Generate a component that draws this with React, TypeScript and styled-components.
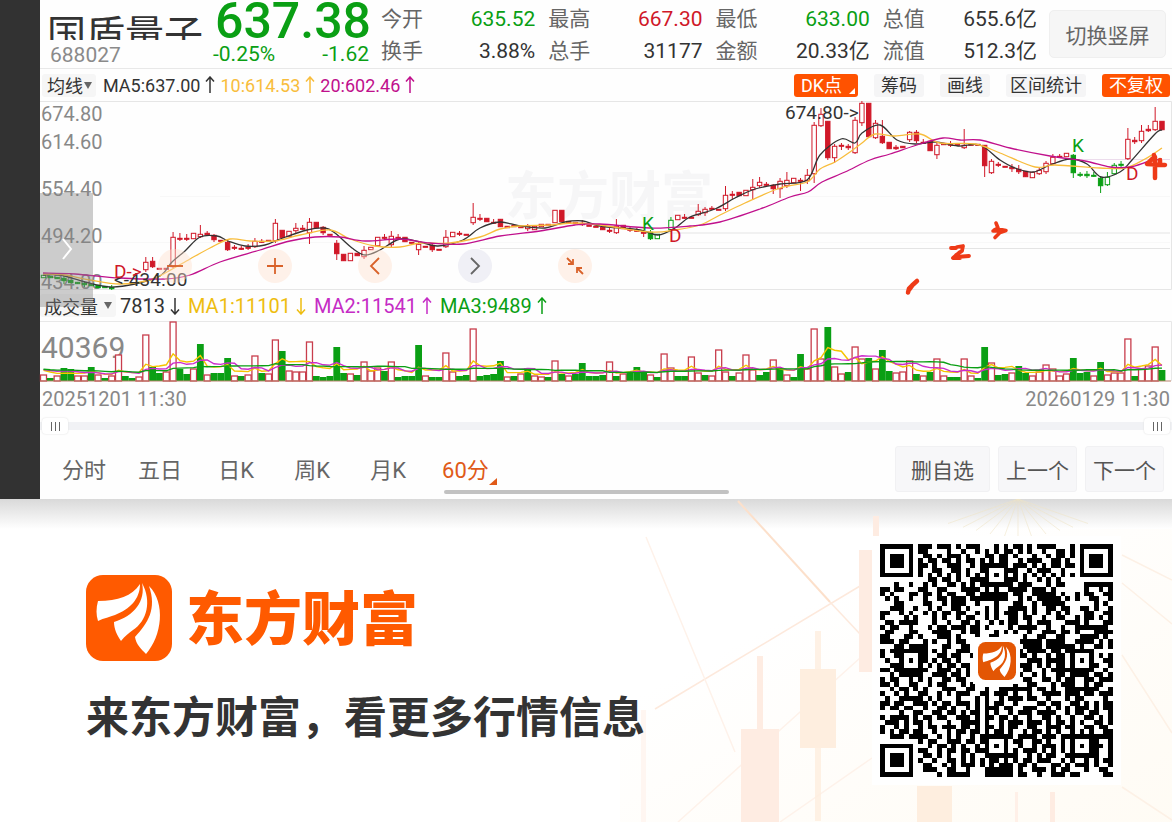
import React from "react";
import styled, { createGlobalStyle } from "styled-components";

const GlobalStyle = createGlobalStyle`
  * { box-sizing: border-box; }
  body { margin: 0; background: #fff; font-family: Roboto, "Noto Sans CJK SC", sans-serif; color: #333; }
  button { font-family: inherit; padding: 0; border: 0; background: none; cursor: pointer; white-space: nowrap; }
`;

const GREEN = "#0a9f14";
const RED = "#d01828";
const ORANGE = "#f8bd3c";
const MAGENTA = "#c0108c";
const BRAND = "#ff5a00";

const Terminal = styled.main`
  display: flex;
`;
const SideBar = styled.div`
  flex: 0 0 40px;
  background: #323232;
`;
const Panel = styled.div`
  flex: 1;
  min-width: 0;
  background: #fefefe;
`;

const Header = styled.header`
  display: flex;
  height: 69px;
  padding-right: 6px;
  border-bottom: 1px solid #e8e8e8;
`;
const NameBlock = styled.div`
  width: 173px;
  padding: 8px 0 0 7px;
`;
const StockName = styled.h1`
  height: 32px;
  margin: 0;
  overflow: hidden;
  font-size: 39px;
  line-height: 54px;
  font-weight: 400;
  white-space: nowrap;
`;
const StockCode = styled.div`
  padding-left: 3px;
  font-size: 21px;
  line-height: 30px;
  color: #8a8a8a;
`;
const PriceBlock = styled.div`
  width: 156px;
  color: ${GREEN};
`;
const Price = styled.div`
  height: 40px;
  padding-left: 2px;
  font-size: 50px;
  line-height: 42px;
  font-weight: 500;
`;
const Change = styled.div`
  display: flex;
  justify-content: space-between;
  font-size: 21px;
  line-height: 28px;
`;
const Stats = styled.dl`
  flex: 1;
  display: grid;
  grid-template-columns: repeat(4, 1fr);
  grid-auto-rows: 32px;
  column-gap: 13px;
  margin: 3px 0 0 12px;
`;
const Stat = styled.div`
  display: flex;
  justify-content: space-between;
  font-size: 21px;
  line-height: 32px;
  white-space: nowrap;
  dt { color: #666; }
  dd { margin: 0; }
`;
const StatValue = styled.dd<{ $color?: string }>`
  color: ${(p) => p.$color || "#333"};
`;
const RotateButton = styled.button`
  width: 117px;
  height: 48px;
  margin: 10px 0 0 12px;
  border: 1px solid #efefef;
  border-radius: 5px;
  background: #f6f6f6;
  color: #666;
  font-size: 21px;
`;

const IndicatorRow = styled.div`
  display: flex;
  align-items: center;
  height: 32px;
  padding: 0 2px;
  font-size: 18px;
`;
const Picker = styled.button<{ $gap: number }>`
  display: flex;
  align-items: center;
  gap: ${(p) => p.$gap}px;
  height: 23px;
  margin-right: 7px;
  padding: 0 4px 0 5px;
  border-radius: 3px;
  background: #f6f6f6;
  font-size: 18px;
  color: #333;
`;
const Reading = styled.span<{ $color: string }>`
  display: flex;
  align-items: center;
  gap: 5px;
  margin-right: 5px;
  color: ${(p) => p.$color};
  white-space: nowrap;
`;
const Tools = styled.div`
  display: flex;
  gap: 16px;
  margin-left: auto;
`;
const ToolButton = styled.button<{ $active?: boolean; $tight?: boolean }>`
  position: relative;
  height: 23px;
  padding: 0 ${(p) => (p.$tight ? 4 : 7)}px;
  border-radius: 3px;
  background: ${(p) => (p.$active ? "#ff5200" : "#f5f5f6")};
  color: ${(p) => (p.$active ? "#fff" : "#333")};
  font-size: 18px;
  line-height: 23px;
`;
const DkButton = styled(ToolButton)`
  padding-right: 16px;
  &::after {
    content: "";
    position: absolute;
    right: 3px;
    bottom: 3px;
    border-left: 6px solid transparent;
    border-bottom: 6px solid #fff;
  }
`;

const ChartArea = styled.section`
  position: relative;
`;
const Drawing = styled.svg`
  display: block;
  width: 100%;
  height: auto;
  overflow: visible;
`;
const FloatingControls = styled.div`
  position: absolute;
  left: 118px;
  bottom: 7px;
  display: flex;
  gap: 66px;
`;
const RoundButton = styled.button<{ $muted?: boolean }>`
  width: 34px;
  height: 34px;
  border-radius: 50%;
  background: ${(p) => (p.$muted ? "rgba(225,226,238,.5)" : "rgba(255,225,205,.42)")};
  color: ${(p) => (p.$muted ? "#666" : "#d9622a")};
  svg { display: block; }
`;
const DrawerHandle = styled.button`
  position: absolute;
  z-index: 2;
  left: 0;
  bottom: -17px;
  width: 53px;
  height: 114px;
  background: rgba(130, 130, 130, 0.4);
`;

const VolumeRow = styled(IndicatorRow)`
  height: 31px;
  padding: 0;
  font-size: 20px;
  ${Picker} {
    margin-right: 4px;
    padding-left: 4px;
  }
  ${Reading} {
    margin-right: 8px;
  }
`;
const Dates = styled.div`
  display: flex;
  justify-content: space-between;
  padding: 3px 2px 0;
  font-size: 20px;
  line-height: 28px;
  color: #888;
`;
const RangeTrack = styled.div`
  position: relative;
  height: 8px;
  margin-top: 9px;
  background: #f1f2f5;
`;
const RangeInput = styled.input`
  position: absolute;
  left: 2px;
  top: -4px;
  width: calc(100% - 4px);
  height: 16px;
  margin: 0;
  appearance: none;
  background: none;
  pointer-events: none;
  &::-webkit-slider-thumb {
    appearance: none;
    pointer-events: auto;
    width: 26px;
    height: 16px;
    border-radius: 4px;
    background:
      linear-gradient(90deg, #666 1px, transparent 1px 4px, #666 4px 5px, transparent 5px 8px, #666 8px 9px) center / 9px 9px no-repeat,
      #fff;
    box-shadow: 0 0 2px #ddd;
  }
`;
const Footer = styled.nav`
  position: relative;
  display: flex;
  align-items: center;
  height: 48px;
  margin-top: 15px;
  padding: 0 8px 0 22px;
`;
const Tabs = styled.div`
  display: flex;
  gap: 32px;
  padding-top: 3px;
`;
const Tab = styled.button<{ $active?: boolean }>`
  position: relative;
  min-width: 44px;
  font-size: 22px;
  line-height: 34px;
  color: ${(p) => (p.$active ? "#e05a18" : "#666")};
  &::after {
    content: "";
    display: ${(p) => (p.$active ? "block" : "none")};
    position: absolute;
    right: -8px;
    bottom: 3px;
    border-left: 8px solid transparent;
    border-bottom: 7px solid #e05a18;
  }
`;
const ScrollBar = styled.div`
  position: absolute;
  left: 404px;
  bottom: -1px;
  width: 285px;
  height: 4px;
  border-radius: 2px;
  background: #c2c2c2;
`;
const Actions = styled.div`
  display: flex;
  gap: 8px;
  margin-left: auto;
`;
const ActionButton = styled.button<{ $wide?: boolean }>`
  width: ${(p) => (p.$wide ? 95 : 79)}px;
  height: 46px;
  border: 1px solid #f1f1f3;
  border-radius: 3px;
  background: #f7f7f9;
  color: #555;
  font-size: 21px;
`;
const PanelEnd = styled.div`
  height: 6px;
`;

const Banner = styled.footer`
  position: relative;
  display: flex;
  align-items: flex-start;
  justify-content: space-between;
  height: 323px;
  padding: 45px 59px 0 86px;
  overflow: hidden;
  background: linear-gradient(#d9d9d9, #e8e8e8 12px, #fff 30px);
`;
const BannerArt = styled.svg`
  position: absolute;
  right: 0;
  top: 0;
`;
const Brand = styled.div`
  position: relative;
  padding-top: 31px;
`;
const LogoRow = styled.div`
  display: flex;
  align-items: center;
  gap: 14px;
  height: 86px;
`;
const LogoText = styled.div`
  font-size: 58px;
  line-height: 86px;
  padding-top: 4px;
  font-weight: 900;
  color: ${BRAND};
`;
const Slogan = styled.p`
  margin: 26px 0 0;
  font-size: 43px;
  line-height: 62px;
  font-weight: 700;
  color: #333;
  white-space: nowrap;
`;
const QrHolder = styled.div`
  position: relative;
`;
const QrMark = styled.div`
  position: absolute;
  inset: 0 0 4px;
  display: flex;
  align-items: center;
  justify-content: center;
`;

type Kind = "u" | "d" | "g" | "h";
type Candle = [number, Kind, number, number, number?, number?];

// Index, kind, body top, body bottom, wick top, wick bottom.
const candles: Candle[] = [
  [0, "h", 275, 278], [1, "g", 276, 278], [2, "g", 277, 279], [3, "g", 278, 281, 276, 284], [4, "g", 280, 283], [5, "g", 282, 284],
  [6, "g", 283, 285, 281, 287], [7, "g", 284, 286], [8, "g", 285, 288], [9, "g", 286, 288], [10, "g", 287, 289, 285, 290],
  [15, "u", 262, 270, 257, 272],
  [16, "d", 261, 267, 257, 268], [17, "d", 268, 269], [18, "d", 268, 269], [19, "u", 237, 267, 232, 268], [20, "d", 238, 239, 233, 241],
  [21, "d", 238, 239, 234, 241], [22, "u", 233, 239], [23, "u", 234, 237, 225, 238], [24, "d", 233, 235, 231, 236], [25, "d", 235, 240, 234, 242],
  [26, "d", 240, 241], [27, "d", 242, 250, 240, 251], [28, "d", 247, 248, 245, 250], [29, "d", 248, 249, 246, 250], [30, "d", 247, 248, 244, 250],
  [31, "u", 241, 247, 238, 248], [32, "d", 241, 242, 239, 243], [33, "d", 240, 241], [34, "u", 223, 241, 219, 243], [35, "d", 230, 238],
  [36, "u", 231, 237], [37, "u", 228, 231, 223, 233], [38, "d", 228, 229, 225, 230], [39, "u", 222, 233, 218, 244], [40, "d", 222, 228],
  [41, "d", 227, 233, 226, 235], [42, "d", 234, 235], [43, "d", 243, 254, 240, 260], [44, "d", 254, 261], [45, "u", 253, 261],
  [46, "d", 253, 256], [47, "u", 250, 257, 246, 259], [48, "u", 247, 250], [49, "u", 237, 246], [50, "d", 237, 238, 234, 240],
  [51, "u", 236, 245, 231, 247], [52, "d", 237, 238, 234, 240], [53, "d", 237, 242], [54, "d", 242, 243], [55, "u", 244, 250, 242, 255],
  [56, "d", 246, 247], [57, "d", 245, 250, 243, 252], [58, "d", 249, 250], [59, "u", 237, 247, 230, 248], [60, "u", 232, 237],
  [61, "d", 233, 234, 231, 236], [62, "d", 234, 235], [63, "u", 217, 223, 203, 225], [64, "d", 218, 219, 214, 221], [65, "d", 218, 222],
  [66, "d", 222, 223, 219, 224], [67, "d", 219, 227], [68, "d", 226, 228], [69, "d", 225, 227], [70, "d", 226, 228], [71, "u", 226, 229, 224, 231],
  [72, "u", 226, 230], [73, "u", 224, 227], [74, "d", 224, 226], [75, "u", 210, 223], [76, "d", 210, 222], [77, "d", 221, 223],
  [78, "d", 222, 224], [79, "d", 223, 225, 220, 226], [80, "d", 225, 226], [81, "d", 226, 227], [82, "d", 227, 230], [83, "d", 230, 231, 228, 233],
  [84, "u", 226, 233, 219, 234], [85, "d", 225, 229], [86, "d", 229, 230, 227, 232], [87, "d", 230, 231, 228, 232], [88, "d", 232, 233, 230, 237],
  [89, "g", 232, 239, 230, 240], [90, "h", 234, 239], [92, "h", 220, 230, 217, 232], [93, "u", 215, 220], [94, "d", 217, 218, 214, 219],
  [95, "d", 217, 218], [96, "u", 211, 215, 204, 216], [97, "u", 209, 213, 207, 216], [98, "d", 208, 209, 206, 210], [99, "d", 209, 210],
  [100, "u", 195, 209, 186, 211], [101, "d", 194, 195, 191, 199], [102, "d", 192, 196], [103, "u", 190, 196], [104, "u", 187, 190, 179, 200],
  [105, "u", 182, 186, 177, 188], [106, "d", 184, 185, 182, 187], [107, "d", 185, 189, 184, 194], [108, "u", 181, 189, 178, 198],
  [109, "u", 180, 186, 172, 188], [110, "u", 178, 183], [111, "d", 180, 181, 178, 191], [112, "u", 175, 181, 169, 184],
  [113, "u", 125, 174, 122, 183], [114, "u", 114, 126, 108, 127], [115, "d", 121, 158, 121, 160], [116, "u", 146, 158, 144, 163],
  [117, "d", 145, 146, 143, 150], [118, "d", 146, 148, 144, 150], [119, "u", 120, 153, 117, 154], [120, "u", 103, 123, 101, 126], [121, "d", 103, 137],
  [122, "u", 123, 138, 120, 139], [123, "d", 136, 143, 120, 144], [124, "d", 142, 149], [125, "d", 147, 149, 145, 150], [126, "d", 146, 148],
  [127, "u", 132, 140, 131, 142], [128, "d", 132, 141, 130, 143], [129, "d", 142, 143, 139, 144], [130, "d", 141, 151], [131, "u", 145, 155, 143, 159],
  [132, "d", 143, 145], [133, "d", 144, 145, 141, 147], [134, "d", 144, 145], [135, "u", 145, 148, 129, 149], [136, "d", 144, 145], [137, "d", 144, 145],
  [138, "d", 145, 166, 145, 177], [139, "u", 161, 173, 159, 174], [140, "d", 164, 165, 162, 167], [141, "d", 166, 167], [142, "d", 167, 169, 164, 172],
  [143, "d", 169, 172, 165, 174], [144, "d", 171, 177], [145, "u", 172, 178], [146, "u", 170, 174, 167, 175], [147, "u", 163, 172, 161, 174],
  [148, "u", 157, 164, 154, 165], [149, "d", 156, 157, 154, 158], [150, "u", 153, 157], [151, "g", 155, 173, 154, 178], [152, "g", 174, 175, 172, 177],
  [153, "g", 174, 176, 171, 178], [154, "g", 175, 176, 172, 177], [155, "g", 178, 186, 176, 193], [156, "h", 177, 185, 172, 186], [157, "h", 165, 174, 163, 175],
  [158, "g", 164, 165, 161, 167], [159, "u", 139, 159, 128, 160], [160, "d", 140, 142, 137, 144], [161, "u", 131, 141, 125, 143],
  [162, "d", 129, 131, 125, 132], [163, "u", 121, 130, 107, 131], [164, "d", 121, 130],
];

const volumeText =
  "r6 g3 r5 g13 g12 r5 r5 g14 r6 g3 r5 r26 g5 g3 r4 r46 g14 g8 r9 r59 g12 g7 r12 g37 r6 g8 g8 g23 r5 g5 r6 r25 g8 r7 r41 g30 r10 r9 r9 r39 g5 g4 g5 g34 g8 r7 g6 r19 r10 r13 g10 r19 g4 g5 g5 g36 r5 g4 g4 r28 r9 g5 g6 r52 g5 g6 g7 g20 r4 g5 r7 g13 r5 r4 g4 r20 g7 r5 g7 g18 g5 g5 g6 r19 g5 r7 g9 g14 g9 r6 g4 r27 r13 g5 g5 r24 r8 g6 r5 r31 r9 g5 r8 r26 r11 g6 g9 r21 g13 r6 g4 g27 r12 r52 r22 g54 r14 r7 g9 r34 r22 g23 r12 g31 g10 r8 r9 r20 g7 r5 g9 r22 r5 g4 g4 r22 r5 g3 g34 r18 g6 g7 r8 g15 g8 r5 r9 r16 r12 r5 r7 g23 g8 g9 r5 g19 r6 r8 r8 r42 g5 r12 r15 r34 g11";
const volumes = volumeText.split(" ").map((v) => ({ up: v[0] === "r", h: Number(v.slice(1)) }));

const xAt = (i: number) => 43.5 + 6.82 * i;

function average(span: number) {
  return volumes
    .map((_, i) => {
      const part = volumes.slice(Math.max(0, i - span + 1), i + 1);
      const sum = part.reduce((a, b) => a + b.h, 0) + (span - part.length) * 12;
      return `${xAt(i).toFixed(1)},${(381 - sum / span).toFixed(1)}`;
    })
    .join(" ");
}

// Catmull-Rom spline through the given points.
function smooth(points: number[][]) {
  let d = `M${points[0]}`;
  for (let i = 0; i < points.length - 1; i++) {
    const a = points[Math.max(0, i - 1)];
    const b = points[i];
    const c = points[i + 1];
    const e = points[Math.min(points.length - 1, i + 2)];
    d += `C${b[0] + (c[0] - a[0]) / 6},${b[1] + (c[1] - a[1]) / 6} ${c[0] - (e[0] - b[0]) / 6},${c[1] - (e[1] - b[1]) / 6} ${c}`;
  }
  return d;
}

const ma5 = [[43, 275], [60, 275], [85, 282], [110, 287], [135, 284], [160, 276], [172, 262], [185, 251], [200, 237], [217, 236], [228, 241], [245, 246], [265, 245], [280, 239], [307, 230], [325, 228], [335, 233], [352, 248], [365, 255], [380, 250], [400, 239], [420, 242], [438, 246], [463, 240], [480, 228], [500, 222], [520, 226], [545, 228], [565, 222], [583, 221], [600, 226], [640, 230], [658, 235], [675, 228], [690, 217], [715, 209], [735, 198], [755, 189], [780, 184], [807, 180], [820, 155], [841, 139], [855, 143], [862, 133], [880, 125], [897, 140], [915, 144], [935, 142], [958, 146], [980, 145], [1000, 160], [1015, 168], [1033, 172], [1050, 165], [1070, 159], [1087, 164], [1101, 177], [1120, 172], [1132, 160], [1155, 134], [1162, 130]];
const ma10 = [[43, 274], [65, 275], [90, 280], [120, 284], [150, 280], [167, 272], [190, 259], [210, 248], [230, 239], [250, 241], [275, 241], [300, 235], [330, 230], [350, 239], [375, 246], [400, 247], [420, 243], [450, 243], [480, 237], [500, 229], [520, 226], [550, 225], [575, 223], [600, 225], [650, 232], [675, 230], [700, 225], [720, 215], [745, 203], [780, 188], [807, 182], [820, 169], [835, 162], [850, 152], [862, 143], [875, 134], [895, 136], [920, 134], [940, 143], [975, 144], [1000, 153], [1035, 167], [1055, 165], [1100, 168], [1125, 168], [1145, 159], [1162, 148]];
const ma20 = [[43, 273], [75, 274], [120, 278], [165, 279], [190, 275], [220, 262], [260, 250], [290, 241], [315, 237], [340, 237], [365, 241], [400, 239], [430, 243], [463, 244], [500, 236], [540, 231], [575, 225], [600, 224], [650, 228], [690, 226], [720, 222], [760, 209], [790, 197], [808, 192], [822, 182], [845, 172], [870, 160], [890, 154], [920, 144], [943, 138], [960, 140], [980, 140], [1010, 148], [1050, 156], [1085, 161], [1110, 167], [1130, 167], [1150, 161], [1162, 159]];

function CandleShape({ c }: { c: Candle }) {
  const [i, kind, top, bottom, high = top, low = bottom] = c;
  const x = xAt(i);
  const color = kind === "u" || kind === "d" ? RED : GREEN;
  const hollow = kind === "u" || kind === "h";
  return (
    <g stroke={color} fill={hollow ? "#fff" : color} strokeWidth="1">
      <path d={`M${x} ${high}V${low}`} />
      <rect x={x - 2.2} y={top + 0.3} width="4.4" height={Math.max(1, bottom - top - 0.6)} />
    </g>
  );
}

function PriceChart() {
  return (
    <Drawing viewBox="40 101 1132 189" fontFamily='Roboto, "Noto Sans CJK SC", sans-serif'>
      <text x="505" y="215" fontSize="52" fontWeight="700" fill="#f6f6f7">东方财富</text>
      <path d="M40 101.5H1171.5V289.5H40" fill="none" stroke="#e6e6e6" />
      <path d="M640 233H1170M480 248.500H1170" stroke="#e4e4e4" />
      <path d="M40 242.500H1170M160 196.500H230M780 196.500H1170" stroke="#f8f8f8" />
      <path d="M1070 159.500H1170" stroke="#ecdcec" />
      <g fontSize="20" fill="#888">
        <text x="41" y="121">674.80</text>
        <text x="41" y="149">614.60</text>
        <text x="41" y="196">554.40</text>
        <text x="41" y="243">494.20</text>
        <text x="41" y="289">434.00</text>
      </g>
      {candles.map((c) => <CandleShape key={c[0]} c={c} />)}
      <g fill="none" strokeWidth="1.300">
        <path d={smooth(ma5)} stroke="#333" />
        <path d={smooth(ma10)} stroke={ORANGE} />
        <path d={smooth(ma20)} stroke={MAGENTA} />
      </g>
      <g fontSize="19">
        <text x="785" y="119" fill="#333">674.80-&gt;</text>
        <text x="114" y="286" fill="#333">&lt;-434.00</text>
        <text x="114" y="278" fill={RED}>D-&gt;</text>
        <text x="642" y="230" fill={GREEN}>K</text>
        <text x="669" y="242" fill={RED}>D</text>
        <text x="1072" y="152" fill={GREEN}>K</text>
        <text x="1126" y="180" fill={RED}>D</text>
      </g>
      <g fill="none" stroke="#ee3a17" strokeWidth="4" strokeLinecap="round" strokeLinejoin="round">
        <path d="M908 292.500l1-4 3-3 5-4.500M909 290l3-4" strokeWidth="4.500" />
        <path d="M951 248h5M957 247l6-1-1 5-6 4M960 252l-7 6 7 0M956 257l13-1" strokeWidth="3.800" />
        <path d="M996 223l2 5-4 2M998 229l8 1.500-6 2-5 5M993 231h10" strokeWidth="3.600" />
        <path d="M1154 155v4M1152 159l-5 5 18 1M1155 157v21M1154 165h6M1160 160v4" strokeWidth="4.500" />
      </g>
    </Drawing>
  );
}

function VolumeChart() {
  return (
    <Drawing viewBox="40 321 1132 61" fontFamily="Roboto, sans-serif">
      <path d="M40 321.500H1171.500V381" fill="none" stroke="#e8e8e8" />
      <text x="41" y="358" fontSize="30" fill="#888">40369</text>
      {volumes.map((v, i) => (
        <rect
          key={i}
          x={xAt(i) - (v.up ? 3 : 3.4)}
          y={381 - v.h}
          width={v.up ? 6 : 6.8}
          height={v.h}
          fill={v.up ? "#fff" : GREEN}
          stroke={v.up ? "#c83d4c" : "none"}
          strokeWidth="1.300"
        />
      ))}
      <g fill="none" strokeWidth="1.400">
        <polyline points={average(5)} stroke="#f5c400" />
        <polyline points={average(10)} stroke="#cc2ccc" />
        <polyline points={average(20)} stroke={GREEN} />
      </g>
      <path d="M40 381H1171" stroke="#b9826c" strokeWidth="1" />
    </Drawing>
  );
}

function Arrow({ down }: { down?: boolean }) {
  return (
    <svg width="10" height="18" viewBox="0 0 10 18" fill="none" stroke="currentColor" strokeWidth="1.500" aria-hidden="true">
      <path d={down ? "M5 1V17M1 12.500L5 17L9 12.500" : "M5 17V1M1 5.500L5 1L9 5.500"} />
    </svg>
  );
}

function Caret() {
  return (
    <svg width="8" height="7" viewBox="0 0 8 7" aria-hidden="true">
      <path d="M0 0H8L4 7Z" fill="#666" />
    </svg>
  );
}

function BrandMark({ size, color }: { size: number; color: string }) {
  return (
    <svg width={size} height={size} viewBox="0 0 86 86" aria-hidden="true">
      <rect width="86" height="86" rx="17" fill={color} />
      <g fill="#fff">
        <path d="M54 9C46 21 32 26 12 26C10 33 10 40 12 46C18 43 24 42 29 40C44 34 54 24 54 9Z" />
        <path d="M56 8C60 26 48 41 28 47C28 54 31 60 35 66C39 61 43 58 47 55C61 46 66 26 56 8Z" />
        <path d="M63 11C71 34 62 48 49 62C50 69 55 74 60 79C76 61 80 28 63 11Z" />
      </g>
    </svg>
  );
}

const qrRows = [
  "#######.###.###.#.###...#.#.##.#.####...#.#######",
  "#.....#.##....#..#..#.#.#.##.#.#..#..##.#.#.....#",
  "#.###.#..##.#.###.#...##.##.#...#..#.##.#.#.###.#",
  "#.###.#.#.##.##.#.##.#.#.##..#.###..##.#..#.###.#",
  "#.###.#.##.#..###..#.#..#.#.###.#.#.##.##.#.###.#",
  "#.....#.#..##..##.#..#.###.##..#.###..#...#.....#",
  "#######.#.#.#.#.#.#.#.#.#.#.#.#.#.#.#.#.#.#######",
  "..........##.##.#..###.#...##.#..#.#.#...........",
  "...#..#..#.#..##.#.#.#######.###...#.##....######",
  "##.##...##..##...####.#.#..####.###.#......#..#.#",
  "#.#...##.##.#.##..##.######.##..#####.#..#.##..##",
  ".#.#..#..#..##.###.########..#.#.#####.#.#..##..#",
  "...##....##..#.###..#...#...##..#.#####......#.#.",
  "..###..#..#.#..##.#...#.#..####.#..##.##..##.#..#",
  "##..#.#..#.#.##.##..#.#.#.###.#.#..#.#.#...##..##",
  "#....#.#...#.#..#.##..#.#..##.##..#..##..#.##.#.#",
  ".##.####...#..#..##.#..#.#.##..#.###...###.#...##",
  "#.##..#...#.##.###.##.#....#.####..#..#..#######.",
  ".##...##...####..#.##...#.#.#..#..###.##.#...####",
  "##...##.#...###.#...#..##.....#..##..##...####.#.",
  "###.##...#.#..#.##.....###.#.#####.####..####.#.#",
  "...##.####...##..##........#..####.######.#..##.#",
  "#.##...###.#.#..###..........#.####.##.#.#.##....",
  "#..##.####..##.##..#.........##.#..#.##.#####.#.#",
  ".#..#.#.##.#.##.#..............###.####.#.#.#..##",
  "..#######.#.#.##.##..........###.#.#.##.####.#..#",
  "##.##....#..###.#.#...........##..#.####...##..#.",
  "..#.#####..###.##.#..........#..#.#..##.####.##.#",
  "#.##..#.#.#..##.##............##..##.#.##..##.###",
  "##.#..##..#.##...#.#........#..##...#.###..#.##..",
  "..#.##.#.#...###..##..#..#######.##.#..#######..#",
  "#..#.#..##..#.#.###..##.###.#..#..####.###.##.###",
  ".#..#####.#.#...#...#.#..#.###.##..#...#.##....#.",
  "##.##..###.#.##.###.#.#.##..#....##.##..##.#.#.##",
  "#.##.##..#..##.#..#.#.###.##..###..#.#.#.###.#.##",
  "....#..##..##.##.#.##.#.#..#.###.####..#.##.##..#",
  "#.####.#.##.##..###.#.##.##.#..#..##.#..#..##.#.#",
  ".###.#.##.#...#..####.#..#.###.###.#.##.#.#..##.#",
  "#..#.#..#.##.###.##.#.##.#.##..##..###.##..##.##.",
  "#.#.##.##..#..#.##.##.#.##.#..#.##.#.#..#.#.#..##",
  "..###.####..#.#.#..#.###.###.####.###.####...####",
  "........#.##..###.##.##..##.##..##.#..#..#.#.#..#",
  "#######...#.##.#.#..#.#.#.#..#..#.###.#.#######.#",
  "#.....#.##..#.##.##.###...#.#.###.#.#.#..#.###..#",
  "#.###.#..##.#.#..#.#..####.##..#.#.##..#######..#",
  "#.###.#.#..#..##.#.#.#.##.#.#.##.###..#.#..#.#.##",
  "#.###.#..##..#.#.###.#.#.###.##.#...##.#.###.#..#",
  "#.....#..###..##..#...######.#..###.#.##...#..##.",
  "#######.....#.#####...######.##..#..###.##.....##",
];

function QrCode() {
  let d = "";
  qrRows.forEach((row, y) => {
    for (let x = 0; x < 49; x++) if (row[x] === "#") d += `M${x} ${y}h1v1h-1z`;
  });
  const anchors: number[][] = [];
  [6, 24, 42].forEach((y) =>
    [6, 24, 42].forEach((x) => {
      const corner = (x === 6 && y === 6) || (x === 42 && y === 6) || (x === 6 && y === 42);
      if (!corner && !(x === 24 && y === 24)) anchors.push([x, y]);
    })
  );
  return (
    <svg width="233" height="233" viewBox="0 0 49 49" shapeRendering="crispEdges" role="img" aria-label="二维码">
      <rect width="49" height="49" fill="#fff" />
      <path d={d} />
      {anchors.map(([x, y]) => (
        <g key={`${x}-${y}`}>
          <rect x={x - 2} y={y - 2} width="5" height="5" />
          <rect x={x - 1} y={y - 1} width="3" height="3" fill="#fff" />
          <rect x={x} y={y} width="1" height="1" />
        </g>
      ))}
      {[[0, 0], [42, 0], [0, 42]].map(([x, y]) => (
        <g key={`f${x}-${y}`}>
          <rect x={x - 1} y={y - 1} width="9" height="9" fill="#fff" />
          <rect x={x} y={y} width="7" height="7" />
          <rect x={x + 1} y={y + 1} width="5" height="5" fill="#fff" />
          <rect x={x + 2} y={y + 2} width="3" height="3" />
        </g>
      ))}
      <rect x="19.500" y="19.500" width="10" height="10" fill="#fff" />
    </svg>
  );
}

function BannerBackground() {
  const rays = [-70, -55, -42, -28, -14, 0, 14, 28, 42, 55, 70];
  return (
    <BannerArt width="552" height="323" viewBox="620 499 552 323" aria-hidden="true">
      <defs>
        <linearGradient id="warm" x1="0" x2="1" y1="0" y2="1">
          <stop offset="0.300" stopColor="#fff8ec" stopOpacity="0" />
          <stop offset="1" stopColor="#fffaf0" stopOpacity="0.700" />
        </linearGradient>
      </defs>
      <rect x="620" y="529" width="552" height="293" fill="url(#warm)" />
      <g fill="none" stroke="#fde9dc" strokeWidth="1.500">
        <path d="M738 501L830 602" stroke="#fce0cb" strokeWidth="2" />
        <path d="M830 602L860 634" />
        <path d="M655 709L860 586" />
        <path d="M646 537L735 752M678 822L870 649M780 822L872 758" stroke="#fef2ea" />
        <path d="M1122 555L1172 580M1122 583L1172 624M1122 655L1172 733M1122 787L1172 820" stroke="#fdf1e6" />
      </g>
      <g stroke="#efe3c4" strokeOpacity="0.550">
        {rays.map((r) => <path key={r} d={`M1018 499L${1018 + r} ${541 - Math.abs(r) / 4}`} />)}
      </g>
      <g fill="#feece2">
        <rect x="741" y="729" width="38" height="93" />
        <rect x="757" y="656" width="6" height="74" />
        <rect x="859" y="550" width="14" height="122" />
        <rect x="873" y="516" width="6" height="34" />
        <rect x="641" y="710" width="5" height="112" fill="#fff6f1" />
        <rect x="1015" y="792" width="3" height="30" fill="#fff0e8" />
        <rect x="1050" y="792" width="5" height="30" />
      </g>
      <g fill="#feeedf">
        <rect x="800" y="669" width="36" height="79" />
        <rect x="815" y="631" width="6" height="190" opacity="0.800" />
        <rect x="917" y="786" width="35" height="36" />
      </g>
      <rect x="872" y="536" width="249" height="249" fill="#fff" />
    </BannerArt>
  );
}

const stats: [string, string, string?][] = [
  ["今开", "635.52", GREEN], ["最高", "667.30", RED], ["最低", "633.00", GREEN], ["总值", "655.6亿"],
  ["换手", "3.88%"], ["总手", "31177"], ["金额", "20.33亿"], ["流值", "512.3亿"],
];

const controls: [string, string, boolean?][] = [
  ["缩小", "M9 17H25"],
  ["放大", "M9 17H25M17 9V25"],
  ["左移", "M21 9L13 17L21 25"],
  ["右移", "M13 9L21 17L13 25", true],
  ["收起", "M9 9L15 15M10 15H15V10M25 25L19 19M19 24V19H24"],
];

export default function App() {
  return (
    <>
      <GlobalStyle />
      <Terminal>
        <SideBar />
        <Panel>
          <Header>
            <NameBlock>
              <StockName>国盾量子</StockName>
              <StockCode>688027</StockCode>
            </NameBlock>
            <PriceBlock>
              <Price>637.38</Price>
              <Change><span>-0.25%</span><span>-1.62</span></Change>
            </PriceBlock>
            <Stats>
              {stats.map(([label, value, color]) => (
                <Stat key={label}>
                  <dt>{label}</dt>
                  <StatValue $color={color}>{value}</StatValue>
                </Stat>
              ))}
            </Stats>
            <RotateButton>切换竖屏</RotateButton>
          </Header>

          <IndicatorRow>
            <Picker $gap={1}>均线<Caret /></Picker>
            <Reading $color="#333">MA5:637.00<Arrow /></Reading>
            <Reading $color={ORANGE}>10:614.53<Arrow /></Reading>
            <Reading $color={MAGENTA}>20:602.46<Arrow /></Reading>
            <Tools>
              <DkButton $active>DK点</DkButton>
              <ToolButton>筹码</ToolButton>
              <ToolButton>画线</ToolButton>
              <ToolButton $tight>区间统计</ToolButton>
              <ToolButton $active>不复权</ToolButton>
            </Tools>
          </IndicatorRow>

          <ChartArea>
            <PriceChart />
            <FloatingControls>
              {controls.map(([label, d, muted]) => (
                <RoundButton key={label} aria-label={label} $muted={muted}>
                  <svg width="34" height="34" viewBox="0 0 34 34" fill="none" stroke="currentColor" strokeWidth="1.800">
                    <path d={d} />
                  </svg>
                </RoundButton>
              ))}
            </FloatingControls>
            <DrawerHandle aria-label="展开">
              <svg width="12" height="24" viewBox="0 0 12 24" fill="none" stroke="#fff" strokeWidth="2">
                <path d="M2 2L10 12L2 22" />
              </svg>
            </DrawerHandle>
          </ChartArea>

          <VolumeRow>
            <Picker $gap={6}>成交量<Caret /></Picker>
            <Reading $color="#333">7813<Arrow down /></Reading>
            <Reading $color="#eebd10">MA1:11101<Arrow down /></Reading>
            <Reading $color="#c52cc5">MA2:11541<Arrow /></Reading>
            <Reading $color={GREEN}>MA3:9489<Arrow /></Reading>
          </VolumeRow>
          <VolumeChart />
          <Dates><span>20251201 11:30</span><span>20260129 11:30</span></Dates>
          <RangeTrack>
            <RangeInput type="range" aria-label="起始" min={0} max={100} defaultValue={0} />
            <RangeInput type="range" aria-label="结束" min={0} max={100} defaultValue={100} />
          </RangeTrack>
          <Footer>
            <Tabs>
              {["分时", "五日", "日K", "周K", "月K"].map((t) => <Tab key={t}>{t}</Tab>)}
              <Tab $active>60分</Tab>
            </Tabs>
            <Actions>
              <ActionButton $wide>删自选</ActionButton>
              <ActionButton>上一个</ActionButton>
              <ActionButton>下一个</ActionButton>
            </Actions>
            <ScrollBar />
          </Footer>
          <PanelEnd />
        </Panel>
      </Terminal>

      <Banner>
        <BannerBackground />
        <Brand>
          <LogoRow>
            <BrandMark size={86} color={BRAND} />
            <LogoText>东方财富</LogoText>
          </LogoRow>
          <Slogan>来东方财富，看更多行情信息</Slogan>
        </Brand>
        <QrHolder>
          <QrCode />
          <QrMark><BrandMark size={38} color="#e35604" /></QrMark>
        </QrHolder>
      </Banner>
    </>
  );
}
